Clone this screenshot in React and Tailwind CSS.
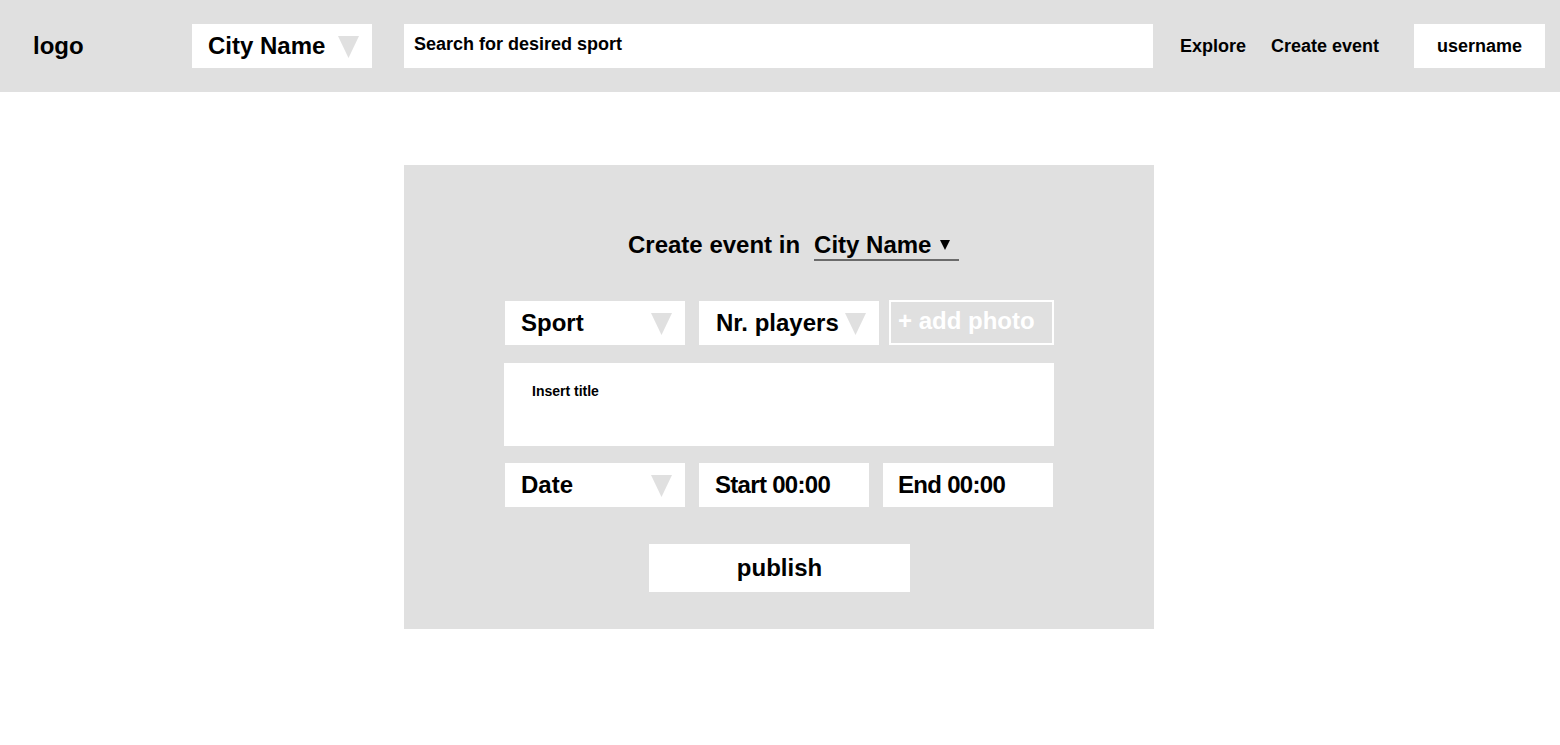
import React from 'react'

const font = { fontFamily: '"Liberation Sans", Arial, sans-serif' }

function Caret({ className = '' }) {
  return (
    <svg width="21" height="22" viewBox="0 0 21 22" className={className}>
      <polygon points="0,0 21,0 10.5,22" fill="#e0e0e0" />
    </svg>
  )
}

function SelectBox({ label, width, textPad = 'pl-4' }) {
  return (
    <div className={`relative bg-white h-[44px] ${width} flex items-center ${textPad}`}>
      <span className="text-[24px] font-bold text-black leading-[28px]">{label}</span>
      <Caret className="absolute right-[13px] top-[12px]" />
    </div>
  )
}

function TextBox({ label, width, textPad = 'pl-4' }) {
  return (
    <div className={`bg-white h-[44px] ${width} flex items-center ${textPad}`}>
      <span className="text-[24px] font-bold text-black leading-[28px] tracking-[-0.7px]">{label}</span>
    </div>
  )
}

export default function App() {
  return (
    <div className="min-h-[745px] bg-white text-black" style={font}>
      {/* Top bar */}
      <header className="h-[92px] bg-[#e0e0e0] flex items-center">
        <div className="w-[192px] pl-[33px] text-[24px] font-bold leading-[28px]">logo</div>
        <div className="relative w-[180px] h-[44px] bg-white flex items-center pl-4">
          <span className="text-[24px] font-bold leading-[28px]">City Name</span>
          <Caret className="absolute right-[13px] top-[12px]" />
        </div>
        <div className="ml-[32px] w-[749px] h-[44px] bg-white flex items-center pl-[10px] pb-[5px]">
          <span className="text-[18px] font-bold leading-[20px]">Search for desired sport</span>
        </div>
        <nav className="ml-[27px] flex items-center gap-[25px] text-[18px] font-bold leading-[20px]">
          <a>Explore</a>
          <a>Create event</a>
        </nav>
        <div className="ml-[35px] w-[131px] h-[44px] bg-white flex items-center justify-center text-[18px] font-bold leading-[20px]">
          username
        </div>
      </header>

      {/* Create event card */}
      <main className="pt-[73px]">
        <div className="ml-[404px] w-[750px] bg-[#e0e0e0] pt-[66px] pb-[37px]">
          <div className="flex items-start pl-[224px] gap-[14px]">
            <span className="text-[24px] font-bold leading-[28px]">Create event in</span>
            <span className="inline-flex items-center gap-[9px] border-b-2 border-[#6b6b6b] pr-[9px] text-[24px] font-bold leading-[28px]">
              City Name
              <svg width="10" height="10" viewBox="0 0 10 10">
                <polygon points="0,0 10,0 5,10" fill="#000" />
              </svg>
            </span>
          </div>

          <div className="mt-[40px] ml-[101px] flex items-start">
            <SelectBox label="Sport" width="w-[180px]" />
            <SelectBox label="Nr. players" width="w-[180px] ml-[14px]" textPad="pl-[17px]" />
            <div className="ml-[10px] -mt-px w-[165px] h-[45px] border-2 border-white flex items-center pl-[7px] pb-[4px]">
              <span className="text-[24px] font-bold leading-[28px] text-white">+ add photo</span>
            </div>
          </div>

          <div className="mt-[18px] ml-[100px] w-[550px] h-[83px] bg-white pl-[28px] pt-[16px]">
            <span className="text-[14px] font-bold leading-[16px]">Insert title</span>
          </div>

          <div className="mt-[17px] ml-[101px] flex items-start">
            <SelectBox label="Date" width="w-[180px]" />
            <TextBox label="Start 00:00" width="w-[170px] ml-[14px]" />
            <TextBox label="End 00:00" width="w-[170px] ml-[14px]" textPad="pl-[15px]" />
          </div>

          <div className="mt-[37px] ml-[245px] w-[261px] h-[48px] bg-white flex items-center justify-center">
            <span className="text-[24px] font-bold leading-[28px]">publish</span>
          </div>
        </div>
      </main>
    </div>
  )
}
